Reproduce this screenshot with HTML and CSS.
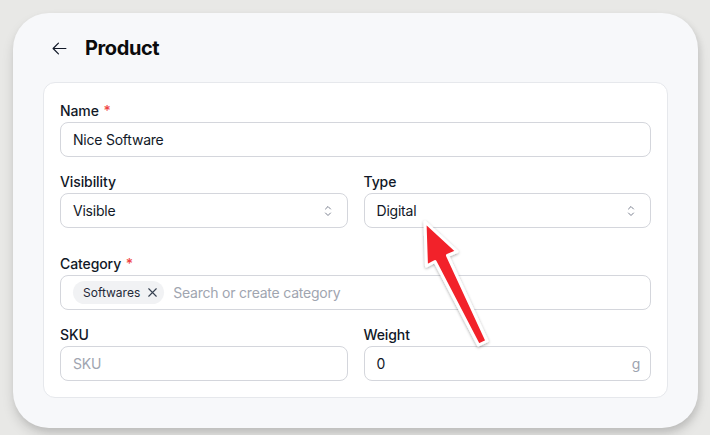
FILE: index.html
```html
<!DOCTYPE html>
<html lang="en">
<head>
<meta charset="utf-8">
<title>Product</title>
<link rel="stylesheet" href="styles.css">
</head>
<body>
<div class="stage">
  <div class="window">
    <header class="header">
      <button class="back" type="button" aria-label="Back">
        <svg width="17" height="17" viewBox="0 0 24 24" fill="none" stroke="currentColor" stroke-width="1.7" stroke-linecap="round" stroke-linejoin="round"><path d="M10.5 19.5 3 12m0 0 7.5-7.5M3 12h18"/></svg>
      </button>
      <h1 class="title">Product</h1>
    </header>

    <section class="card">
      <div class="form">
        <div class="field">
          <label class="label">Name <span class="req">*</span></label>
          <div class="control">Nice Software</div>
        </div>

        <div class="row">
          <div class="field">
            <label class="label">Visibility</label>
            <div class="control select">
              <span>Visible</span>
              <svg class="updown" width="16" height="16" viewBox="0 0 24 24" fill="none" stroke="currentColor" stroke-width="1.5" stroke-linecap="round" stroke-linejoin="round"><path d="M8.25 15 12 18.75 15.75 15m-7.5-6L12 5.25 15.75 9"/></svg>
            </div>
          </div>
          <div class="field">
            <label class="label">Type</label>
            <div class="control select">
              <span>Digital</span>
              <svg class="updown" width="16" height="16" viewBox="0 0 24 24" fill="none" stroke="currentColor" stroke-width="1.5" stroke-linecap="round" stroke-linejoin="round"><path d="M8.25 15 12 18.75 15.75 15m-7.5-6L12 5.25 15.75 9"/></svg>
            </div>
          </div>
        </div>

        <div class="field field-spaced">
          <label class="label">Category <span class="req">*</span></label>
          <div class="control tags">
            <span class="chip">Softwares
              <svg width="15" height="15" viewBox="0 0 24 24" fill="none" stroke="currentColor" stroke-width="1.8" stroke-linecap="round" stroke-linejoin="round"><path d="M6 18 18 6M6 6l12 12"/></svg>
            </span>
            <span class="placeholder">Search or create category</span>
          </div>
        </div>

        <div class="row">
          <div class="field">
            <label class="label">SKU</label>
            <div class="control"><span class="placeholder">SKU</span></div>
          </div>
          <div class="field">
            <label class="label">Weight</label>
            <div class="control suffixed">
              <span>0</span>
              <span class="suffix">g</span>
            </div>
          </div>
        </div>
      </div>
    </section>
  </div>

  <svg class="annotation" width="90" height="150" viewBox="0 0 90 150" aria-hidden="true">
    <defs>
      <filter id="shadow" x="-30%" y="-30%" width="160%" height="160%">
        <feDropShadow dx="0" dy="1" stdDeviation="1.6" flood-color="#000" flood-opacity="0.35"/>
      </filter>
    </defs>
    <polygon points="15,12 47,41.5 37.5,45.5 77,131 68.5,135 25,51.5 16.5,56" fill="#f22129" stroke="#ffffff" stroke-width="3" stroke-linejoin="round" filter="url(#shadow)"/>
  </svg>
</div>
</body>
</html>
```

FILE: styles.css
```css
* {
  box-sizing: border-box;
}

html, body {
  margin: 0;
  padding: 0;
}

body {
  background: #e8e8e6;
  font-family: Inter, "Noto Sans", "Liberation Sans", sans-serif;
  color: #111827;
}

.stage {
  position: relative;
  width: 710px;
  height: 435px;
  padding: 13px 0 0 13px;
}

.window {
  width: 685px;
  background: #f7f8fa;
  border-radius: 36px;
  padding: 19px 30px 30px;
  box-shadow: 0 7px 12px rgba(0, 0, 0, 0.13), 2px 3px 6px rgba(0, 0, 0, 0.08);
}

.header {
  display: flex;
  align-items: center;
  gap: 10px;
  height: 32px;
  margin-bottom: 18px;
}

.back {
  width: 32px;
  height: 32px;
  display: flex;
  align-items: center;
  justify-content: center;
  padding: 0;
  border: 0;
  background: transparent;
  color: #111827;
}

.title {
  margin: 0;
  font-size: 20px;
  line-height: 28px;
  font-weight: 700;
  letter-spacing: -0.4px;
  color: #0b0b0c;
}

.card {
  background: #ffffff;
  border: 1px solid #e6e8ec;
  border-radius: 12px;
  padding: 18px 16px 16px;
}

.form {
  display: flex;
  flex-direction: column;
  gap: 15px;
}

.row {
  display: grid;
  grid-template-columns: 1fr 1fr;
  gap: 16px;
}

.field-spaced {
  margin-top: 11px;
}

.label {
  display: block;
  font-size: 14px;
  line-height: 20px;
  font-weight: 500;
  letter-spacing: -0.1px;
  color: #111827;
  margin-bottom: 1px;
}

.req {
  color: #ef4444;
  margin-left: 1px;
}

.control {
  height: 35px;
  display: flex;
  align-items: center;
  border: 1px solid #d4d6dc;
  border-radius: 8px;
  padding: 0 12px;
  font-size: 14px;
  line-height: 20px;
  letter-spacing: -0.22px;
  color: #111827;
  background: #ffffff;
}

.select {
  justify-content: space-between;
  padding-right: 11px;
}

.updown {
  color: #7b8190;
  flex: none;
}

.tags {
  gap: 9px;
}

.chip {
  display: inline-flex;
  align-items: center;
  gap: 5px;
  height: 23px;
  padding: 0 4px 0 10px;
  border-radius: 999px;
  background: #f1f2f4;
  font-size: 12px;
  letter-spacing: 0;
  color: #1f2937;
}

.chip svg {
  color: #374151;
}

.placeholder {
  color: #a0a5b0;
}

.suffixed {
  padding-right: 10px;
}

.suffix {
  margin-left: auto;
  color: #9ca3af;
}

.annotation {
  position: absolute;
  left: 410px;
  top: 210px;
  overflow: visible;
}
```
